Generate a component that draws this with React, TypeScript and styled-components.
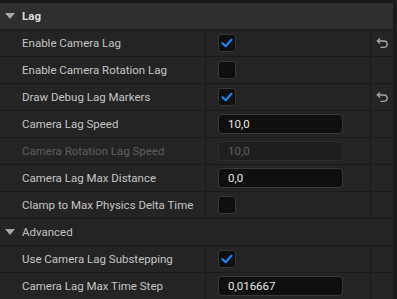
import React from "react";
import styled, { createGlobalStyle } from "styled-components";

const Global = createGlobalStyle`
  html, body { margin: 0; padding: 0; background: #1a1a1a; }
  body { font-family: Roboto, "Noto Sans", "Liberation Sans", sans-serif; }
  * { box-sizing: border-box; }
`;

const Page = styled.div`
  display: flex;
  width: 397px;
  height: 299px;
  overflow: hidden;
  background: #1a1a1a;
`;

const Panel = styled.div`
  display: flex;
  flex-direction: column;
  width: 393px;
  padding-top: 3px;
`;

const ScrollTrack = styled.div`
  width: 4px;
  background: #1a1a1a;
`;

const CategoryHeader = styled.div<{ $sub?: boolean }>`
  display: flex;
  align-items: center;
  height: 27px;
  padding-left: 5px;
  padding-bottom: 1px;
  gap: 7px;
  background: ${(p) => (p.$sub ? "#242424" : "#2f2f2f")};
  border-bottom: 1px solid #1a1a1a;
  color: ${(p) => (p.$sub ? "#c0c0c0" : "#dcdcdc")};
  font-size: 11.5px;
  font-weight: ${(p) => (p.$sub ? 400 : 700)};
`;

const Row = styled.div`
  display: grid;
  grid-template-columns: 206px 165px 22px;
  height: 27px;
  background: #242424;
  border-bottom: 1px solid #1a1a1a;
  &:last-child { border-bottom: none; height: 26px; }
`;

const LabelCell = styled.div<{ $disabled?: boolean }>`
  display: flex;
  align-items: center;
  padding-left: 22px;
  padding-bottom: 1px;
  border-right: 1px solid #1a1a1a;
  color: ${(p) => (p.$disabled ? "#5e5e5e" : "#c4c4c4")};
  font-size: 11.5px;
  white-space: nowrap;
`;

const ValueCell = styled.div`
  display: flex;
  align-items: center;
  padding-left: 12px;
  border-right: 1px solid #1a1a1a;
`;

const ResetCell = styled.div`
  display: flex;
  align-items: center;
  justify-content: center;
  padding-left: 1px;
`;

const Box = styled.div`
  width: 18px;
  height: 18px;
  border-radius: 3px;
  background: #0f0f0f;
  border: 1px solid #383838;
  display: flex;
  align-items: center;
  justify-content: center;
`;

const NumInput = styled.div<{ $disabled?: boolean }>`
  width: 125px;
  height: 20px;
  border-radius: 4px;
  display: flex;
  align-items: center;
  padding-left: 9px;
  font-size: 11.5px;
  background: ${(p) => (p.$disabled ? "#1f1f1f" : "#0f0f0f")};
  border: 1px solid ${(p) => (p.$disabled ? "#2c2c2c" : "#383838")};
  color: ${(p) => (p.$disabled ? "#5e5e5e" : "#e4e4e4")};
`;

const Triangle = () => (
  <svg width="10" height="6" viewBox="0 0 10 6">
    <path d="M0 0 H10 L5 6 Z" fill="#a8a8a8" />
  </svg>
);

const Check = () => (
  <svg width="14" height="14" viewBox="0 0 14 14">
    <path
      d="M2.5 7.2 L5.6 10.2 L11.5 3.8"
      fill="none"
      stroke="#1f86ee"
      strokeWidth="2.2"
      strokeLinecap="round"
      strokeLinejoin="round"
    />
  </svg>
);

const ResetIcon = () => (
  <svg width="13" height="11" viewBox="0 0 13 11">
    <path
      d="M1.5 3 H8 A3.2 3.2 0 0 1 8 9.4 H4.5"
      fill="none"
      stroke="#a6a6a6"
      strokeWidth="1.4"
    />
    <path d="M4 0.6 L1.4 3 L4 5.4" fill="none" stroke="#a6a6a6" strokeWidth="1.4" />
  </svg>
);

type Prop = {
  label: string;
  kind: "check" | "num";
  checked?: boolean;
  value?: string;
  disabled?: boolean;
  reset?: boolean;
};

const PropRow = ({ p }: { p: Prop }) => (
  <Row>
    <LabelCell $disabled={p.disabled}>{p.label}</LabelCell>
    <ValueCell>
      {p.kind === "check" ? (
        <Box>{p.checked && <Check />}</Box>
      ) : (
        <NumInput $disabled={p.disabled}>{p.value}</NumInput>
      )}
    </ValueCell>
    <ResetCell>{p.reset && <ResetIcon />}</ResetCell>
  </Row>
);

const lag: Prop[] = [
  { label: "Enable Camera Lag", kind: "check", checked: true, reset: true },
  { label: "Enable Camera Rotation Lag", kind: "check" },
  { label: "Draw Debug Lag Markers", kind: "check", checked: true, reset: true },
  { label: "Camera Lag Speed", kind: "num", value: "10,0" },
  { label: "Camera Rotation Lag Speed", kind: "num", value: "10,0", disabled: true },
  { label: "Camera Lag Max Distance", kind: "num", value: "0,0" },
  { label: "Clamp to Max Physics Delta Time", kind: "check" },
];

const advanced: Prop[] = [
  { label: "Use Camera Lag Substepping", kind: "check", checked: true },
  { label: "Camera Lag Max Time Step", kind: "num", value: "0,016667" },
];

export default function App() {
  return (
    <>
      <Global />
      <Page>
        <Panel>
          <CategoryHeader>
            <Triangle />
            Lag
          </CategoryHeader>
          {lag.map((p) => (
            <PropRow key={p.label} p={p} />
          ))}
          <CategoryHeader $sub>
            <Triangle />
            Advanced
          </CategoryHeader>
          {advanced.map((p) => (
            <PropRow key={p.label} p={p} />
          ))}
        </Panel>
        <ScrollTrack />
      </Page>
    </>
  );
}
